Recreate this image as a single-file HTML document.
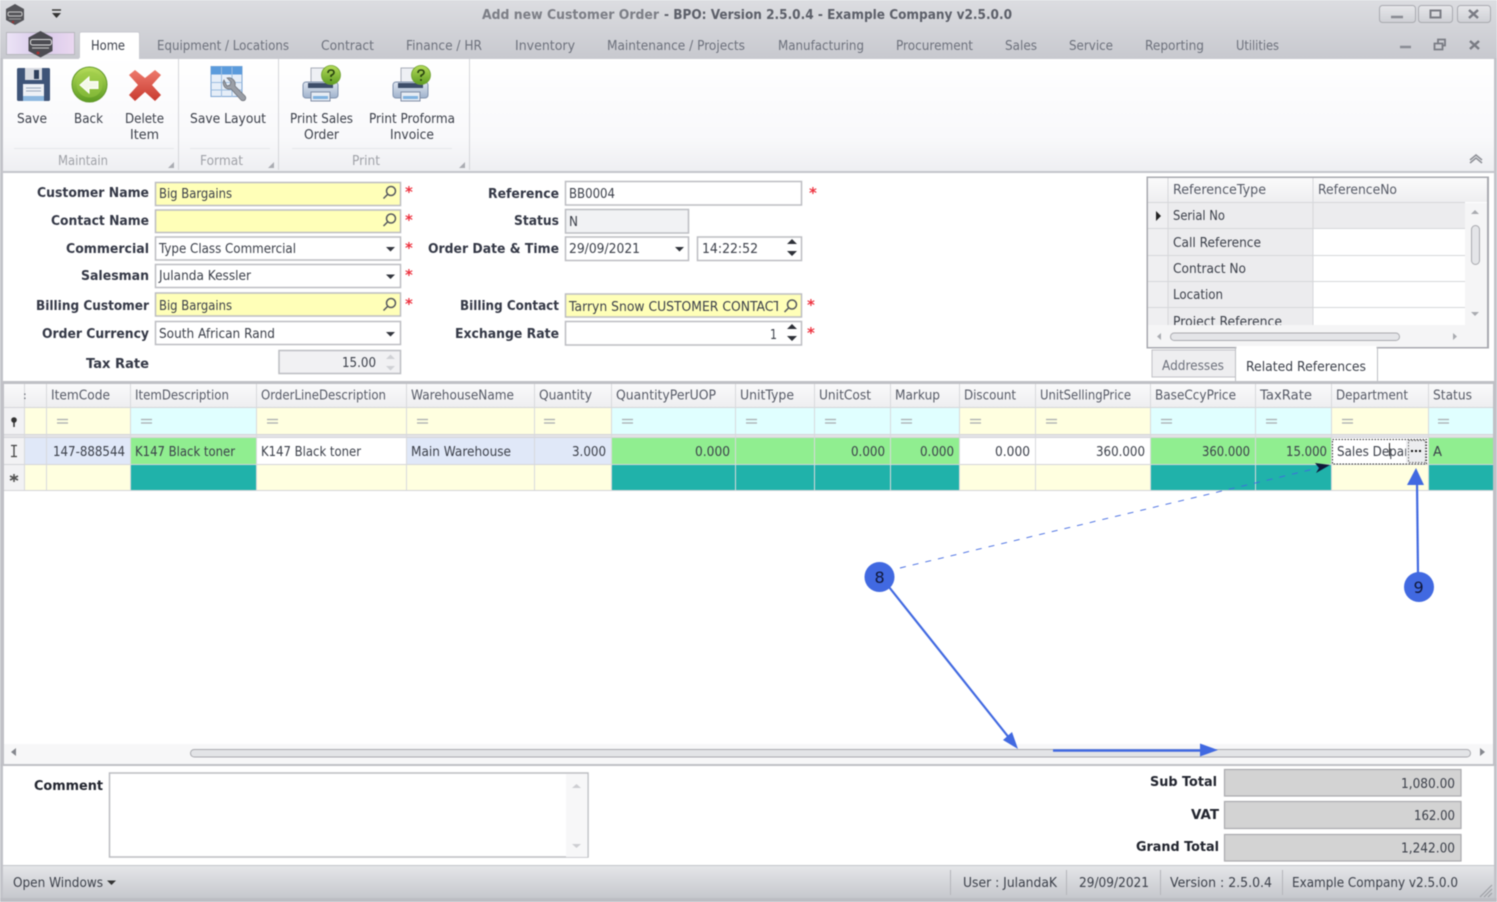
<!DOCTYPE html>
<html><head><meta charset="utf-8"><title>Add new Customer Order</title>
<style>
html,body{margin:0;padding:0;background:#fff;width:1497px;height:902px;overflow:hidden}
svg{display:block;filter:blur(.45px)}
text{font-family:"DejaVu Sans","Liberation Sans",sans-serif;font-size:13px;fill:#4e525c}
.b{font-weight:bold;fill:#343846;font-size:13px}
.t{fill:#6d717c}
.d{fill:#3c404a}
.g{fill:#a0a2a8}
.h{fill:#565a66}
.a{fill:#ee3340;font-weight:bold;font-size:15px}
</style></head><body>
<svg xmlns="http://www.w3.org/2000/svg" width="1497" height="902" viewBox="0 0 1497 902">
<defs>
<linearGradient id="top" x1="0" y1="0" x2="0" y2="1"><stop offset="0" stop-color="#dcdde1"/><stop offset="1" stop-color="#c8c9cf"/></linearGradient>
<linearGradient id="rib" x1="0" y1="0" x2="0" y2="1"><stop offset="0" stop-color="#ffffff"/><stop offset=".7" stop-color="#f9f9fb"/><stop offset="1" stop-color="#eeeff2"/></linearGradient>
<linearGradient id="hd" x1="0" y1="0" x2="0" y2="1"><stop offset="0" stop-color="#fafafb"/><stop offset="1" stop-color="#eeeef0"/></linearGradient>
<linearGradient id="st" x1="0" y1="0" x2="0" y2="1"><stop offset="0" stop-color="#e4e5e8"/><stop offset="1" stop-color="#c6c8cd"/></linearGradient>
<linearGradient id="app" x1="0" y1="0" x2="1" y2="0"><stop offset="0" stop-color="#ece4f6"/><stop offset=".5" stop-color="#d8c9ea"/><stop offset="1" stop-color="#ead8f0"/></linearGradient>
<linearGradient id="grn" x1="0" y1="0" x2="0" y2="1"><stop offset="0" stop-color="#b6dc5a"/><stop offset="1" stop-color="#5d9c22"/></linearGradient>
<linearGradient id="red" x1="0" y1="0" x2="0" y2="1"><stop offset="0" stop-color="#ee7a6c"/><stop offset="1" stop-color="#c83a30"/></linearGradient>
<linearGradient id="btn" x1="0" y1="0" x2="0" y2="1"><stop offset="0" stop-color="#e6e7ea"/><stop offset="1" stop-color="#cfd0d5"/></linearGradient>
<linearGradient id="prb" x1="0" y1="0" x2="0" y2="1"><stop offset="0" stop-color="#dfe6f0"/><stop offset="1" stop-color="#9fb2cc"/></linearGradient>
<clipPath id="rc"><rect x="1148" y="178" width="339" height="147"/></clipPath>
<clipPath id="bc"><rect x="566" y="295" width="212" height="21"/></clipPath>
</defs>

<!-- window chrome -->
<rect width="1497" height="902" fill="#c2c3c9"/>
<rect width="1497" height="58" fill="url(#top)"/>
<path d="M15 4l9 5v11l-9 5-9-5V9z" fill="#55555a"/><rect x="8" y="12" width="14" height="4" rx="1.500" fill="none" stroke="#c9c9c9"/><path d="M9 19h12" stroke="#999"/><circle cx="13" cy="22" r="1.200" fill="#933"/>
<path d="M52 10h9" stroke="#333" stroke-width="1.400"/><path d="M52 13h9l-4.500 5z" fill="#333"/>
<text class="t b" x="482" y="19" textLength="177" lengthAdjust="spacingAndGlyphs" style="fill:#7c7e86">Add new Customer Order</text>
<text class="b" x="664" y="19" textLength="348" lengthAdjust="spacingAndGlyphs" style="fill:#5c5f69">- BPO: Version 2.5.0.4 - Example Company v2.5.0.0</text>
<g fill="url(#btn)" stroke="#a9aab0"><rect x="1379.500" y="5.500" width="36" height="17" rx="3"/><rect x="1418.500" y="5.500" width="34" height="17" rx="3"/><rect x="1457.500" y="5.500" width="33" height="17" rx="3"/></g>
<path d="M1391 17h12" stroke="#888a92" stroke-width="2.500"/><rect x="1430.500" y="10.500" width="10" height="7" fill="none" stroke="#7a7c84" stroke-width="2"/><path d="M1469 10l9 8M1478 10l-9 8" stroke="#7a7c84" stroke-width="2.500"/>
<path d="M1400 47h11" stroke="#8a8c94" stroke-width="2.500"/><path d="M1434.500 43.500h8v6h-8zM1438 43v-3.500h7v6h-2.500" fill="none" stroke="#7a7c84" stroke-width="1.800"/><path d="M1470 41l9 8M1479 41l-9 8" stroke="#7a7c84" stroke-width="2.500"/>

<!-- app button + tabs -->
<rect x="6.500" y="32.500" width="68" height="22" fill="url(#app)" stroke="#b7b8be"/>
<path d="M40.500 31l12 6.500v13.500l-12 6.500-12-6.500V37.500z" fill="#4c4c52"/><rect x="30.500" y="39.500" width="21" height="5.500" rx="2" fill="none" stroke="#e2e2e2"/><path d="M32 48h17" stroke="#bbb" stroke-width="1.200"/><circle cx="38" cy="53" r="1.500" fill="#a33"/>
<path d="M79.500 58V34q0-2 2-2h56q2 0 2 2v24" fill="#fff" stroke="#c9cad0"/>
<text class="d" x="91" y="50" textLength="34" lengthAdjust="spacingAndGlyphs">Home</text>
<g class="tabs">
<text class="t" x="157" y="50" textLength="132" lengthAdjust="spacingAndGlyphs">Equipment / Locations</text>
<text class="t" x="321" y="50" textLength="53" lengthAdjust="spacingAndGlyphs">Contract</text>
<text class="t" x="406" y="50" textLength="76" lengthAdjust="spacingAndGlyphs">Finance / HR</text>
<text class="t" x="515" y="50" textLength="60" lengthAdjust="spacingAndGlyphs">Inventory</text>
<text class="t" x="607" y="50" textLength="138" lengthAdjust="spacingAndGlyphs">Maintenance / Projects</text>
<text class="t" x="778" y="50" textLength="86" lengthAdjust="spacingAndGlyphs">Manufacturing</text>
<text class="t" x="896" y="50" textLength="77" lengthAdjust="spacingAndGlyphs">Procurement</text>
<text class="t" x="1005" y="50" textLength="32" lengthAdjust="spacingAndGlyphs">Sales</text>
<text class="t" x="1069" y="50" textLength="44" lengthAdjust="spacingAndGlyphs">Service</text>
<text class="t" x="1145" y="50" textLength="59" lengthAdjust="spacingAndGlyphs">Reporting</text>
<text class="t" x="1236" y="50" textLength="43" lengthAdjust="spacingAndGlyphs">Utilities</text>
</g>

<!-- ribbon -->
<rect x="3" y="58" width="1491" height="113" fill="url(#rib)"/>
<path d="M3 58.500H79M139 58.500H1494" stroke="#c9cad0"/>
<path d="M178.500 59v111M278.500 59v111M469.500 59v111" stroke="#d5d6da"/>
<path d="M14 148.500h160M190 148.500h80M292 148.500h160" stroke="#e6e7ea"/>
<!-- save -->
<rect x="17" y="68" width="33" height="33" rx="1.500" fill="#3e5478"/><rect x="25" y="68" width="17" height="12" fill="#d8dbe2"/><rect x="34" y="70" width="5" height="9" fill="#2e3f5c"/><rect x="23" y="84" width="21" height="17" fill="#eef1f6"/><path d="M26 88h15M26 91h15" stroke="#9aa8bd"/><rect x="23" y="96" width="21" height="5" fill="#8db8e0"/>
<text class="d" x="17" y="123" textLength="30" lengthAdjust="spacingAndGlyphs">Save</text>
<!-- back -->
<circle cx="89.500" cy="84.500" r="17.500" fill="url(#grn)" stroke="#62992a"/><circle cx="89.500" cy="84.500" r="13" fill="#9ccb45" opacity=".5"/><path d="M80 85l9-8v4.500h9v7h-9V93z" fill="#f3f8e8" stroke="#fff"/>
<text class="d" x="74" y="123" textLength="29" lengthAdjust="spacingAndGlyphs">Back</text>
<!-- delete -->
<path d="M135 70l10 8 10-8 6 5-9 10 9 10-6 6-10-9-10 9-6-6 9-10-9-10z" fill="url(#red)"/>
<text class="d" x="125" y="123" textLength="39" lengthAdjust="spacingAndGlyphs">Delete</text>
<text class="d" x="130" y="139" textLength="29" lengthAdjust="spacingAndGlyphs">Item</text>
<!-- layout -->
<rect x="211" y="66.500" width="31" height="30" fill="#e6eef8" stroke="#7ea6d4"/><rect x="211" y="66.500" width="31" height="8" fill="#5b9bdc"/><path d="M221.500 67v30M232 67v30M211 82.500h31M211 90h31" stroke="#9dbde0"/>
<path d="M224 80a6.500 6.500 0 0 0 1 7.500 6.500 6.500 0 0 0 6 1.500l10 11q2 1.500 4 0 1.500-2 0-4l-10-10a6.500 6.500 0 0 0-8-8l4 4-1 3-3 1z" fill="#9a9ea6" stroke="#6f737b" stroke-width=".8"/>
<text class="d" x="190" y="123" textLength="76" lengthAdjust="spacingAndGlyphs">Save Layout</text>
<!-- printer 1 -->
<g id="pr"><rect x="311" y="68" width="21" height="15" fill="#eef0f4" stroke="#a8adb8"/><rect x="303" y="82" width="35" height="16" rx="3" fill="url(#prb)" stroke="#7f91ad"/><path d="M308 83h25v5h-25z" fill="#3d4e6a"/><rect x="311" y="92" width="19" height="9" fill="#e6ecf4" stroke="#7f8da6"/><rect x="313" y="96" width="15" height="3" fill="#7fb2e0"/><circle cx="331" cy="75" r="9.500" fill="url(#grn)" stroke="#6ea030" stroke-width=".8"/><path d="M328 73q0-3 3-3t3 2.500q0 1.500-3 3v1.500" fill="none" stroke="#27400f" stroke-width="1.600"/><circle cx="331" cy="80" r="1" fill="#27400f"/></g>
<text class="d" x="290" y="123" textLength="63" lengthAdjust="spacingAndGlyphs">Print Sales</text>
<text class="d" x="304" y="139" textLength="35" lengthAdjust="spacingAndGlyphs">Order</text>
<!-- printer 2 -->
<use href="#pr" x="90"/>
<text class="d" x="369" y="123" textLength="86" lengthAdjust="spacingAndGlyphs">Print Proforma</text>
<text class="d" x="390" y="139" textLength="44" lengthAdjust="spacingAndGlyphs">Invoice</text>
<text class="g" x="58" y="165" textLength="50" lengthAdjust="spacingAndGlyphs">Maintain</text>
<text class="g" x="200" y="165" textLength="43" lengthAdjust="spacingAndGlyphs">Format</text>
<text class="g" x="352" y="165" textLength="28" lengthAdjust="spacingAndGlyphs">Print</text>
<path d="M174 162v6h-6zM274 162v6h-6zM465 162v6h-6z" fill="#a9abb1"/>
<path d="M1470 160l6-5 6 5M1470 163l6-5 6 5" fill="none" stroke="#8d8f96" stroke-width="1.500"/>
<rect x="0" y="171" width="1497" height="2" fill="#c4c5cb"/>

<!-- main panel -->
<rect x="3" y="173" width="1491" height="693" fill="#fff"/>

<!-- form labels left -->
<text class="b" x="37" y="197" textLength="112" lengthAdjust="spacingAndGlyphs">Customer Name</text>
<text class="b" x="51" y="225" textLength="98" lengthAdjust="spacingAndGlyphs">Contact Name</text>
<text class="b" x="66" y="253" textLength="83" lengthAdjust="spacingAndGlyphs">Commercial</text>
<text class="b" x="81" y="280" textLength="68" lengthAdjust="spacingAndGlyphs">Salesman</text>
<text class="b" x="36" y="310" textLength="113" lengthAdjust="spacingAndGlyphs">Billing Customer</text>
<text class="b" x="42" y="338" textLength="107" lengthAdjust="spacingAndGlyphs">Order Currency</text>
<text class="b" x="86" y="368" textLength="63" lengthAdjust="spacingAndGlyphs">Tax Rate</text>
<!-- left inputs -->
<g stroke="#bcbdc2" stroke-width="1.500">
<rect x="155.500" y="182.500" width="245" height="23" fill="#ffffb8"/>
<rect x="155.500" y="210" width="245" height="22.500" fill="#ffffb8"/>
<rect x="155.500" y="237" width="245" height="23" fill="#fff"/>
<rect x="155.500" y="264.500" width="245" height="23" fill="#fff"/>
<rect x="155.500" y="293" width="245" height="23" fill="#ffffb8"/>
<rect x="155.500" y="321.500" width="245" height="23" fill="#fff"/>
<rect x="279" y="350.500" width="121.500" height="23" fill="#f1f1f3"/>
</g>
<text class="d" x="159" y="198" textLength="73" lengthAdjust="spacingAndGlyphs">Big Bargains</text>
<text class="d" x="159" y="253" textLength="137" lengthAdjust="spacingAndGlyphs">Type Class Commercial</text>
<text class="d" x="159" y="280" textLength="92" lengthAdjust="spacingAndGlyphs">Julanda Kessler</text>
<text class="d" x="159" y="310" textLength="73" lengthAdjust="spacingAndGlyphs">Big Bargains</text>
<text class="d" x="159" y="338" textLength="116" lengthAdjust="spacingAndGlyphs">South African Rand</text>
<text class="d" x="342" y="367" textLength="34" lengthAdjust="spacingAndGlyphs">15.00</text>
<path d="M386 247h9l-4.500 4.500zM386 274.500h9l-4.500 4.500zM386 332h9l-4.500 4.500z" fill="#33363e"/>
<path d="M386 359l4.500-4.500 4.500 4.500zM386 366l4.500 4.500 4.500-4.500z" fill="#d0d1d5"/>
<text class="a" x="405" y="197">*</text><text class="a" x="405" y="225">*</text><text class="a" x="405" y="253">*</text><text class="a" x="405" y="280">*</text><text class="a" x="405" y="309">*</text>

<!-- form labels right -->
<text class="b" x="488" y="198" textLength="71" lengthAdjust="spacingAndGlyphs">Reference</text>
<text class="b" x="514" y="225" textLength="45" lengthAdjust="spacingAndGlyphs">Status</text>
<text class="b" x="428" y="253" textLength="131" lengthAdjust="spacingAndGlyphs">Order Date &amp; Time</text>
<text class="b" x="460" y="310" textLength="99" lengthAdjust="spacingAndGlyphs">Billing Contact</text>
<text class="b" x="455" y="338" textLength="104" lengthAdjust="spacingAndGlyphs">Exchange Rate</text>
<g stroke="#bcbdc2" stroke-width="1.500">
<rect x="565.500" y="181.500" width="236" height="23.500" fill="#fff"/>
<rect x="565.500" y="209.500" width="123" height="23.500" fill="#f1f2f4"/>
<rect x="565.500" y="237" width="123" height="23.500" fill="#fff"/>
<rect x="697.500" y="237" width="104" height="23.500" fill="#fff"/>
<rect x="565.500" y="294" width="236" height="23" fill="#ffffb8"/>
<rect x="565.500" y="321.500" width="236" height="23.500" fill="#fff"/>
</g>
<text class="d" x="569" y="198" textLength="46" lengthAdjust="spacingAndGlyphs">BB0004</text>
<text class="d" x="569" y="226" textLength="9" lengthAdjust="spacingAndGlyphs">N</text>
<text class="d" x="569" y="253" textLength="71" lengthAdjust="spacingAndGlyphs">29/09/2021</text>
<text class="d" x="702" y="253" textLength="56" lengthAdjust="spacingAndGlyphs">14:22:52</text>
<g clip-path="url(#bc)"><text class="d" x="569" y="311" textLength="212" lengthAdjust="spacingAndGlyphs">Tarryn Snow CUSTOMER CONTACT</text></g>
<text class="d" x="770" y="339" textLength="7" lengthAdjust="spacingAndGlyphs">1</text>
<path d="M787 244l5-5 5 5zM787 251l5 5 5-5zM787 329l5-5 5 5zM787 336l5 5 5-5zM675 247h9l-4.500 4.500z" fill="#2e3138"/>
<g fill="none" stroke="#55585f" stroke-width="1.500">
<g id="mg"><circle cx="391" cy="191" r="4.500"/><path d="M387.500 194.500l-4 4"/></g>
<use href="#mg" y="27.500"/><use href="#mg" y="112"/><use href="#mg" x="401" y="113.500"/>
</g>
<text class="a" x="809" y="198">*</text><text class="a" x="807" y="310">*</text><text class="a" x="807" y="338">*</text>

<!-- related references grid -->
<rect x="1147.500" y="177.500" width="340.500" height="170" fill="#fff" stroke="#a8a9af" stroke-width="2"/>
<rect x="1148" y="178" width="339" height="24" fill="url(#hd)"/>
<g clip-path="url(#rc)">
<rect x="1148" y="202" width="20" height="130" fill="#efeff1"/>
<rect x="1168" y="202" width="145" height="130" fill="#ececee"/>
<rect x="1313" y="202" width="152" height="26" fill="#ececee"/>
<path d="M1148 202.500h317M1148 228.500h317M1148 255.500h317M1148 281.500h317M1148 307.500h317" stroke="#d6d7da"/>
<path d="M1168 178v150M1313 178v150" stroke="#d6d7da"/>
<text class="d" x="1173" y="220" textLength="52" lengthAdjust="spacingAndGlyphs">Serial No</text>
<text class="d" x="1173" y="247" textLength="88" lengthAdjust="spacingAndGlyphs">Call Reference</text>
<text class="d" x="1173" y="273" textLength="73" lengthAdjust="spacingAndGlyphs">Contract No</text>
<text class="d" x="1173" y="299" textLength="50" lengthAdjust="spacingAndGlyphs">Location</text>
<text class="d" x="1173" y="326" textLength="109" lengthAdjust="spacingAndGlyphs">Project Reference</text>
</g>
<text class="h" x="1173" y="194" textLength="93" lengthAdjust="spacingAndGlyphs">ReferenceType</text>
<text class="h" x="1318" y="194" textLength="79" lengthAdjust="spacingAndGlyphs">ReferenceNo</text>
<path d="M1156 211l5 5-5 5z" fill="#222"/>
<rect x="1465" y="203" width="22" height="122" fill="#f5f5f6"/>
<rect x="1148" y="325" width="339" height="22" fill="#f5f5f6"/>
<path d="M1471 214l4-4 4 4zM1471 312l4 4 4-4zM1161 333l-4 3.500 4 3.500zM1453 333l4 3.500-4 3.500z" fill="#a9abb0"/>
<rect x="1471.500" y="225.500" width="8" height="39" rx="4" fill="#e4e5e8" stroke="#a9aaaf"/>
<rect x="1170.500" y="333" width="229" height="7.500" rx="3.700" fill="#e4e5e8" stroke="#a9aaaf"/>
<rect x="1152" y="350" width="84" height="27" fill="#eeeef0" stroke="#c0c1c6"/>
<rect x="1235.500" y="348" width="142" height="34" fill="#fff" stroke="#bdbec3"/>
<rect x="1236.500" y="346" width="140" height="3" fill="#fff"/>
<text class="t" x="1162" y="370" textLength="62" lengthAdjust="spacingAndGlyphs">Addresses</text>
<text class="d" x="1246" y="371" textLength="120" lengthAdjust="spacingAndGlyphs">Related References</text>

<!-- main grid -->
<rect x="3" y="382" width="1491" height="383" fill="none" stroke="#bfc0c5" stroke-width="2"/>
<rect x="4" y="383" width="1489" height="25" fill="url(#hd)"/>
<path d="M4 383.500H1493" stroke="#bfc0c5"/>
<!-- filter -->
<rect x="4" y="408" width="20" height="26" fill="#f2f2f4"/>
<g fill="#ffffe0"><rect x="24" y="408" width="106" height="26"/><rect x="256" y="408" width="355" height="26"/><rect x="959" y="408" width="191" height="26"/><rect x="1331" y="408" width="97" height="26"/></g>
<g fill="#e0ffff"><rect x="130" y="408" width="126" height="26"/><rect x="611" y="408" width="348" height="26"/><rect x="1150" y="408" width="181" height="26"/><rect x="1428" y="408" width="65" height="26"/></g>
<rect x="4" y="434" width="1489" height="4" fill="#e4e4e7"/>
<!-- row1 -->
<rect x="4" y="438" width="20" height="26" fill="#f2f2f4"/>
<rect x="24" y="438" width="106" height="26" fill="#e0e8f8"/>
<rect x="130" y="438" width="126" height="26" fill="#90ee90"/>
<rect x="256" y="438" width="150" height="26" fill="#fff"/>
<rect x="406" y="438" width="205" height="26" fill="#e0e8f8"/>
<rect x="611" y="438" width="348" height="26" fill="#90ee90"/>
<rect x="959" y="438" width="191" height="26" fill="#fff"/>
<rect x="1150" y="438" width="181" height="26" fill="#90ee90"/>
<rect x="1428" y="438" width="65" height="26" fill="#90ee90"/>
<rect x="1331" y="438" width="97" height="26" fill="#fff"/>
<!-- row2 -->
<rect x="4" y="465" width="20" height="25" fill="#f2f2f4"/>
<rect x="24" y="465" width="1469" height="25" fill="#ffffe0"/>
<g fill="#20b2aa"><rect x="130" y="465" width="126" height="25"/><rect x="611" y="465" width="348" height="25"/><rect x="1150" y="465" width="181" height="25"/><rect x="1428" y="465" width="65" height="25"/></g>
<path d="M4 407.500H1493M4 434.500H1493M4 437.500H1493M4 464.500H1493M4 490.500H1493" stroke="#d4d5d9"/>
<g stroke="#d8d9dc"><path d="M24.500 384v106M46.500 384v106M130.500 384v106M256.500 384v106M406.500 384v106M534.500 384v106M611.500 384v106M735.500 384v106M814.500 384v106M890.500 384v106M959.500 384v106M1035.500 384v106M1150.500 384v106M1255.500 384v106M1331.500 384v106M1428.500 384v106"/></g>
<g>
<text class="h" x="23" y="399" style="font-size:11px">:</text>
<text class="h" x="51" y="399.500" textLength="59" lengthAdjust="spacingAndGlyphs">ItemCode</text>
<text class="h" x="135" y="399.500" textLength="94" lengthAdjust="spacingAndGlyphs">ItemDescription</text>
<text class="h" x="261" y="399.500" textLength="125" lengthAdjust="spacingAndGlyphs">OrderLineDescription</text>
<text class="h" x="411" y="399.500" textLength="103" lengthAdjust="spacingAndGlyphs">WarehouseName</text>
<text class="h" x="539" y="399.500" textLength="53" lengthAdjust="spacingAndGlyphs">Quantity</text>
<text class="h" x="616" y="399.500" textLength="100" lengthAdjust="spacingAndGlyphs">QuantityPerUOP</text>
<text class="h" x="740" y="399.500" textLength="54" lengthAdjust="spacingAndGlyphs">UnitType</text>
<text class="h" x="819" y="399.500" textLength="52" lengthAdjust="spacingAndGlyphs">UnitCost</text>
<text class="h" x="895" y="399.500" textLength="45" lengthAdjust="spacingAndGlyphs">Markup</text>
<text class="h" x="964" y="399.500" textLength="52" lengthAdjust="spacingAndGlyphs">Discount</text>
<text class="h" x="1040" y="399.500" textLength="91" lengthAdjust="spacingAndGlyphs">UnitSellingPrice</text>
<text class="h" x="1155" y="399.500" textLength="81" lengthAdjust="spacingAndGlyphs">BaseCcyPrice</text>
<text class="h" x="1260" y="399.500" textLength="52" lengthAdjust="spacingAndGlyphs">TaxRate</text>
<text class="h" x="1336" y="399.500" textLength="72" lengthAdjust="spacingAndGlyphs">Department</text>
<text class="h" x="1433" y="399.500" textLength="39" lengthAdjust="spacingAndGlyphs">Status</text>
</g>
<!-- filter equals -->
<path d="M57 419.500h11M57 423h11M141 419.500h11M141 423h11M267 419.500h11M267 423h11M417 419.500h11M417 423h11M544 419.500h11M544 423h11M622 419.500h11M622 423h11M746 419.500h11M746 423h11M825 419.500h11M825 423h11M901 419.500h11M901 423h11M970 419.500h11M970 423h11M1046 419.500h11M1046 423h11M1161 419.500h11M1161 423h11M1266 419.500h11M1266 423h11M1342 419.500h11M1342 423h11M1438 419.500h11M1438 423h11" stroke="#a9abaf" stroke-width="1.200"/>
<circle cx="14" cy="420" r="2.800" fill="#333"/><path d="M14 422v5" stroke="#333" stroke-width="1.500"/>
<path d="M11 445.500h6M11 456.500h6M14 446v10" stroke="#444" stroke-width="1.300" fill="none"/>
<path d="M14 474v8M10 476l8 4M18 476l-8 4" stroke="#555" stroke-width="1.600"/>
<!-- row values -->
<g>
<text class="d" x="53" y="456" textLength="72" lengthAdjust="spacingAndGlyphs">147-888544</text>
<text class="d" x="135" y="456" textLength="100" lengthAdjust="spacingAndGlyphs">K147 Black toner</text>
<text class="d" x="261" y="456" textLength="100" lengthAdjust="spacingAndGlyphs">K147 Black toner</text>
<text class="d" x="411" y="456" textLength="100" lengthAdjust="spacingAndGlyphs">Main Warehouse</text>
<text class="d" x="572" y="456" textLength="34" lengthAdjust="spacingAndGlyphs">3.000</text>
<text class="d" x="695" y="456" textLength="35" lengthAdjust="spacingAndGlyphs">0.000</text>
<text class="d" x="851" y="456" textLength="34" lengthAdjust="spacingAndGlyphs">0.000</text>
<text class="d" x="920" y="456" textLength="34" lengthAdjust="spacingAndGlyphs">0.000</text>
<text class="d" x="995" y="456" textLength="35" lengthAdjust="spacingAndGlyphs">0.000</text>
<text class="d" x="1096" y="456" textLength="49" lengthAdjust="spacingAndGlyphs">360.000</text>
<text class="d" x="1202" y="456" textLength="48" lengthAdjust="spacingAndGlyphs">360.000</text>
<text class="d" x="1286" y="456" textLength="41" lengthAdjust="spacingAndGlyphs">15.000</text>
<text class="d" x="1337" y="456" textLength="72" lengthAdjust="spacingAndGlyphs">Sales Depar</text>
<text class="d" x="1433" y="456" textLength="9" lengthAdjust="spacingAndGlyphs">A</text>
</g>
<rect x="1406" y="440" width="20" height="23" fill="#ecedef"/>
<rect x="1332.500" y="439.500" width="94" height="24.500" fill="none" stroke="#333" stroke-dasharray="1.500 1.500"/>
<rect x="1408.500" y="440.500" width="17" height="22" fill="none" stroke="#666" stroke-dasharray="1.500 1.500"/>
<path d="M1411 451h2M1415 451h2M1419 451h2" stroke="#111" stroke-width="2"/>
<path d="M1389.500 443v13" stroke="#222"/>

<!-- grid scrollbar -->
<rect x="4" y="744" width="1489" height="20" fill="#f7f7f8"/>
<path d="M11 752l5-4v8zM1485 752l-5-4v8z" fill="#85878d"/>
<rect x="190.500" y="749.500" width="1280" height="7.500" rx="3.700" fill="#e3e4e7" stroke="#a9aaaf"/>
<rect x="0" y="764" width="1497" height="2" fill="#bfc0c5"/>

<!-- annotations -->
<path d="M900 568L1318 468" fill="none" stroke="#4169e1" stroke-width=".9" stroke-dasharray="6 7"/>
<path d="M1330 465l-15-2 4 5-3 5z" fill="#10183a"/>
<path d="M889 587L1010 739" stroke="#4169e1" stroke-width="2.200" fill="none"/>
<path d="M1018 749l-15-9 9-8z" fill="#4169e1"/>
<path d="M1053 750.500h150" stroke="#4169e1" stroke-width="2.600"/>
<path d="M1218 750l-18-6.500v13z" fill="#4169e1"/>
<path d="M1418 573L1417 482" stroke="#4169e1" stroke-width="2.200"/>
<path d="M1416 468l-9 17h17z" fill="#4169e1"/>
<circle cx="879.500" cy="577" r="15" fill="#4169e1"/><circle cx="1419" cy="587" r="15" fill="#4169e1"/>
<text x="874.500" y="583" style="font-size:16px;fill:#10183a">8</text>
<text x="1413.500" y="593" style="font-size:16px;fill:#10183a">9</text>

<!-- bottom section -->
<text class="b" x="34" y="790" textLength="69" lengthAdjust="spacingAndGlyphs" style="fill:#22252f">Comment</text>
<rect x="109.500" y="773" width="478.500" height="84" fill="#fff" stroke="#bcbdc2" stroke-width="1.500"/>
<rect x="566" y="774" width="21.500" height="83" fill="#f7f7f8"/>
<path d="M572 788l4.500-4 4.500 4zM572 844l4.500 4 4.500-4z" fill="#cdced2"/>
<text class="b" x="1150" y="786" textLength="67" lengthAdjust="spacingAndGlyphs" style="fill:#22252f">Sub Total</text>
<text class="b" x="1191" y="819" textLength="28" lengthAdjust="spacingAndGlyphs" style="fill:#22252f">VAT</text>
<text class="b" x="1136" y="851" textLength="83" lengthAdjust="spacingAndGlyphs" style="fill:#22252f">Grand Total</text>
<g fill="#d3d3d3" stroke="#a9a9ad" stroke-width="1.200"><rect x="1224.500" y="769.500" width="236.500" height="26.500"/><rect x="1224.500" y="801.500" width="236.500" height="27"/><rect x="1224.500" y="834.500" width="236.500" height="26.500"/></g>
<text class="d" x="1401" y="788" textLength="54" lengthAdjust="spacingAndGlyphs">1,080.00</text>
<text class="d" x="1414" y="820" textLength="41" lengthAdjust="spacingAndGlyphs">162.00</text>
<text class="d" x="1401" y="852.500" textLength="54" lengthAdjust="spacingAndGlyphs">1,242.00</text>

<!-- status bar -->
<rect x="3" y="866" width="1491" height="32" fill="url(#st)"/>
<path d="M3 865.500H1494" stroke="#c4c5ca"/>
<rect x="0" y="898" width="1497" height="4" fill="#bcbdc3"/>
<text class="d" x="13" y="887" textLength="90" lengthAdjust="spacingAndGlyphs">Open Windows</text>
<path d="M107 880.500h9l-4.500 4.500z" fill="#333"/>
<path d="M950.500 870v25M1066.500 870v25M1160.500 870v25M1282.500 870v25" stroke="#b4b5ba"/>
<text class="d" x="963" y="887" textLength="94" lengthAdjust="spacingAndGlyphs">User : JulandaK</text>
<text class="d" x="1079" y="887" textLength="70" lengthAdjust="spacingAndGlyphs">29/09/2021</text>
<text class="d" x="1170" y="887" textLength="102" lengthAdjust="spacingAndGlyphs">Version : 2.5.0.4</text>
<text class="d" x="1292" y="887" textLength="166" lengthAdjust="spacingAndGlyphs">Example Company v2.5.0.0</text>
<path d="M1480 897l12-12M1484 897l8-8M1488 897l4-4" stroke="#9a9ca2"/>
</svg>
</body></html>
